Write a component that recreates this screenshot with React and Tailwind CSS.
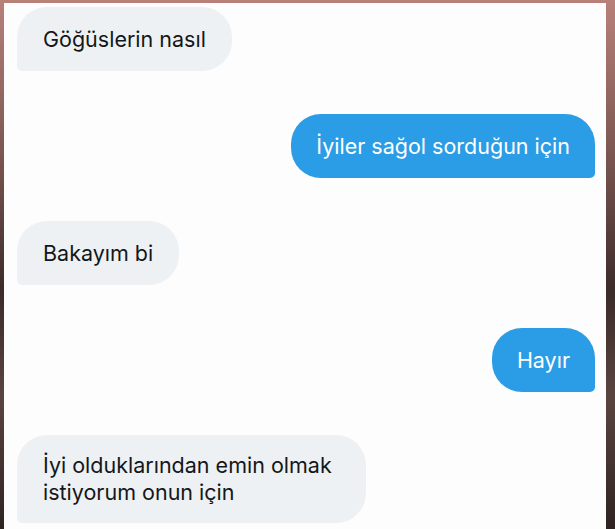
import React from "react";

const messages = [
  { side: "left", lines: ["Göğüslerin nasıl"] },
  { side: "right", lines: ["İyiler sağol sorduğun için"] },
  { side: "left", lines: ["Bakayım bi"] },
  { side: "right", lines: ["Hayır"] },
  { side: "left", lines: ["İyi olduklarından emin olmak", "istiyorum onun için"] },
];

const Bubble = ({ side, lines }) => {
  const multi = lines.length > 1;
  if (side === "right") {
    return (
      <div className="flex justify-end">
        <div className="bg-[#2b9de6] text-white rounded-[30px] rounded-br-[5px] px-[25px] py-[18px] leading-[28px] text-[21.5px]">
          {lines[0]}
        </div>
      </div>
    );
  }
  return (
    <div className="flex justify-start">
      <div
        className={
          multi
            ? "bg-[#eef1f3] text-[#141719] rounded-[30px] rounded-bl-[5px] pl-[26px] pr-[34px] py-[17px] leading-[27px] text-[21.5px]"
            : "bg-[#eef1f3] text-[#141719] rounded-[30px] rounded-bl-[5px] px-[26px] py-[18px] leading-[28px] text-[21.5px]"
        }
      >
        {lines.map((l, i) => (
          <div key={i}>{l}</div>
        ))}
      </div>
    </div>
  );
};

export default function App() {
  return (
    <div className="w-[615px] h-[529px] overflow-hidden bg-[linear-gradient(180deg,#b8817a_0%,#7a5550_30%,#3b2b29_55%,#5a4440_75%,#2f2321_100%)] pt-[3px] pl-[4px] pr-[9px]">
      <div
        className="h-full bg-[#fdfdfd] pt-[4px] pl-[13px] pr-[11px] flex flex-col gap-[43px]"
        style={{ fontFamily: "Inter, 'Noto Sans', sans-serif" }}
      >
        {messages.map((m, i) => (
          <Bubble key={i} side={m.side} lines={m.lines} />
        ))}
      </div>
    </div>
  );
}
